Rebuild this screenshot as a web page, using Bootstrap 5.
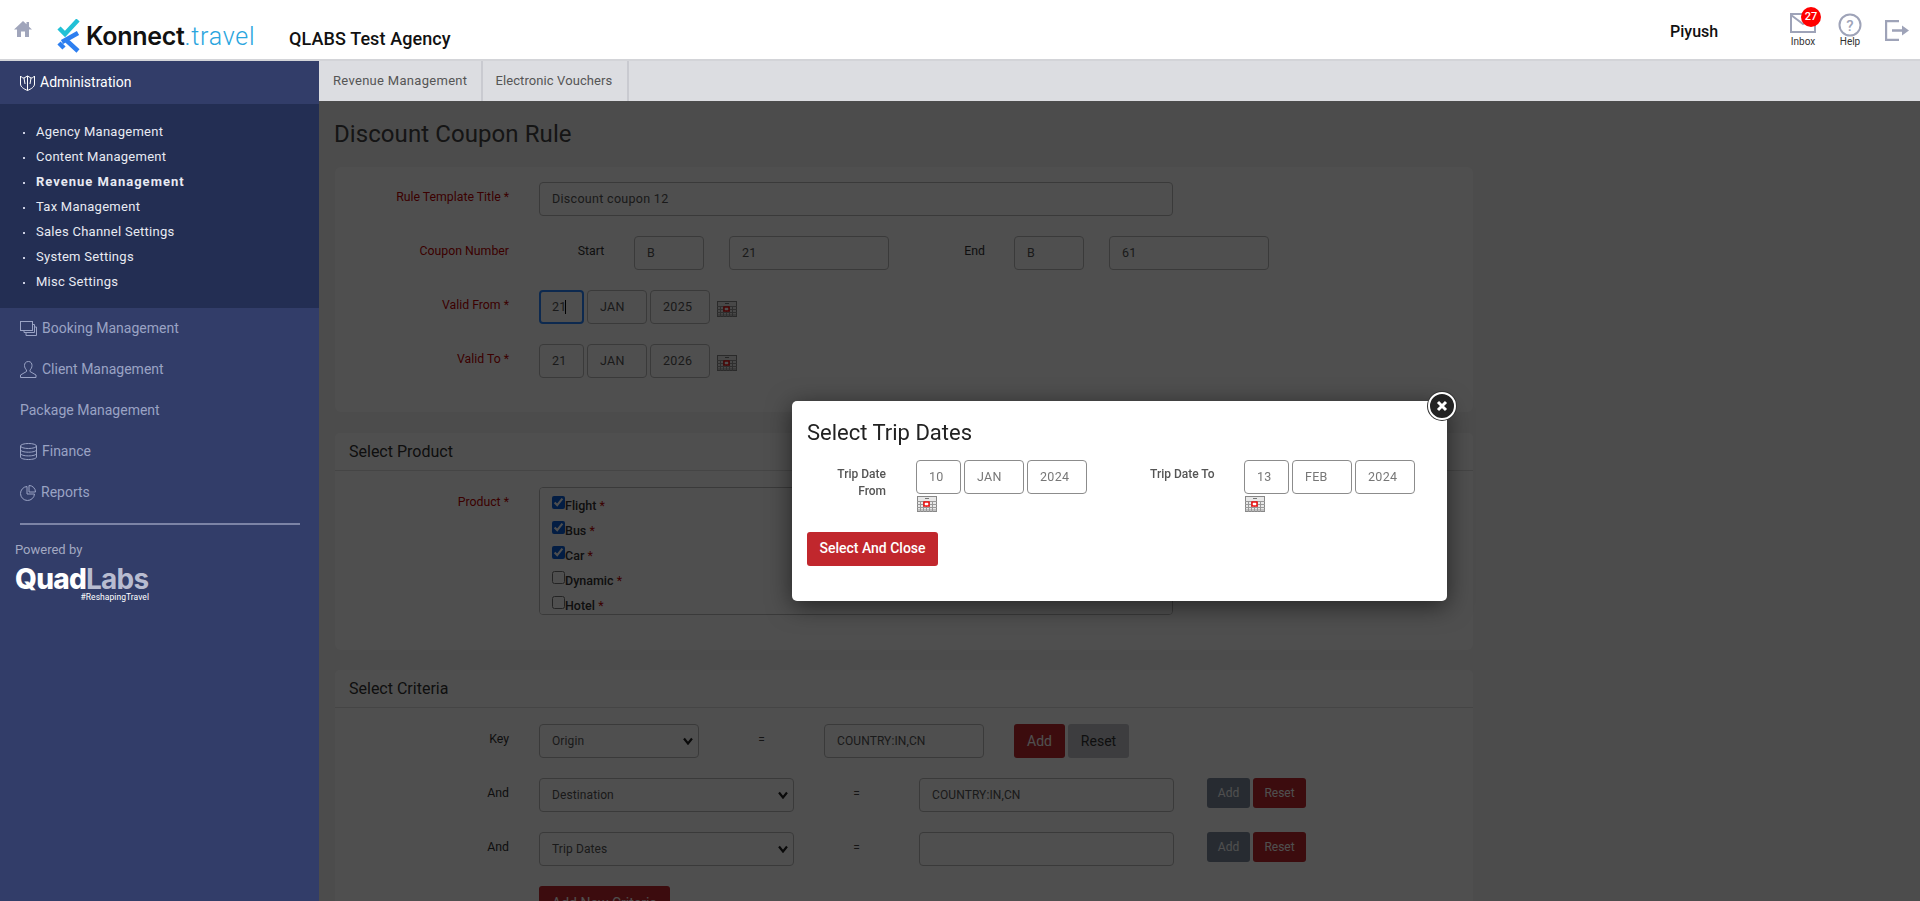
<!DOCTYPE html>
<html lang="en">
<head>
<meta charset="utf-8">
<title>Discount Coupon Rule</title>
<link href="https://cdn.jsdelivr.net/npm/bootstrap@5.3.0/dist/css/bootstrap.min.css" rel="stylesheet">
<style>
html,body{height:901px;overflow:hidden}
body{font-family:Roboto,"Liberation Sans",sans-serif;font-size:13px;color:#222;background:#f5f5f5}
.app-top{height:61px;background:#fff;border-bottom:2px solid #d3d4d8;padding-left:14px}
.home-ic{width:18px;height:18px;margin-top:-1px}
.brand-wrap{margin-left:25px;margin-top:13px;width:232px}
.brand-k{font-family:Inter,Roboto,sans-serif;font-weight:600;font-size:25px;color:#111;letter-spacing:-.3px;line-height:1;margin-left:5px}
.brand-t{font-weight:300;font-size:25px;color:#2aa5de;line-height:1;margin-top:1px;letter-spacing:.75px}
.agency{font-size:18px;font-weight:500;color:#111;margin-top:18px;letter-spacing:.1px}
.user-nm{font-size:16px;font-weight:500;color:#111;position:absolute;left:1670px;top:20px}
.top-tool{position:absolute;top:13px;text-align:center;font-size:10px;color:#333;line-height:1}
.top-tool svg{display:block;margin:0 auto 4px}
.inbox-badge{position:absolute;left:11px;top:-6px;width:20px;height:20px;border-radius:50%;background:#f00;color:#fff;font-size:11px;font-weight:500;line-height:20px;text-align:center}
.app-body{height:840px}
.side{width:319px;background:#323d69;flex:none}
.side-head{height:43px;color:#fff;font-size:14px;padding-left:20px}
.side-head svg{margin-right:5px}
.side-sub{height:204px;background:#232e53;padding:15px 0 0 36px;list-style:none;margin:0}
.side-sub li{height:25px;line-height:25px;color:#e8eaf2;font-size:13px;letter-spacing:.27px;position:relative}
.side-sub li::before{content:"";position:absolute;left:-13px;top:13px;width:2px;height:2px;background:#c9cde0}
.side-sub li.on{font-weight:700;letter-spacing:1px}
.side-item{height:41px;color:#9aa3c4;font-size:14px;padding-left:20px}
.side-item svg{margin-right:5px;flex:none}
.side-rule{height:2px;background:#7c84a6;margin:10px 19px 0 20px}
.pow{color:#a3a9c2;font-size:13px;padding:17px 0 0 15px;line-height:15px}
.ql{margin:10px 0 0 15px;width:134px;height:36px;position:relative}
.ql-a{font-family:Inter,Roboto,sans-serif;font-weight:800;font-size:28px;line-height:24px;color:#fff;letter-spacing:-.75px;white-space:nowrap}
.ql-b{color:#b8bcd0;font-weight:700}
.ql-c{position:absolute;right:0;top:26px;font-size:8.500px;line-height:9px;color:#fff;letter-spacing:.05px;white-space:nowrap}
.work{flex:1 1 auto;min-width:0;position:relative;overflow:hidden}
.tabbar{height:40px;background:#dcdde1;position:relative;z-index:3}
.tabbtn{padding:0 14px;border-right:2px solid #c9cad0;line-height:40px;color:#555;font-size:13px;letter-spacing:.3px;height:40px}
.tabbtn+.tabbtn{padding:0 15px 0 12px;letter-spacing:.1px}
.dim{position:absolute;left:0;right:0;top:40px;bottom:0;background:rgba(0,0,0,.69);z-index:2}
.pg{padding:0 0 0 16px;width:1154px}
.pg-h{font-size:24px;font-weight:400;color:#444;line-height:28px;margin:19px 0 19px -1px;letter-spacing:.08px}
.pcard{border:0;border-radius:6px;background:#fff;--bs-card-bg:#fff;margin-bottom:21px}
.pcard .card-header{background:#fff;height:38px;padding:0 14px;line-height:37px;font-size:16px;color:#333;border-bottom:1px solid #ddd}
.f-row{display:flex;align-items:flex-start;height:34px;margin-bottom:20px}
.f-lbl{width:174px;flex:none;text-align:right;font-size:12.300px;font-weight:400;color:#c00000;padding-top:7px;line-height:17px;margin-right:30px}
.f-lbl.blk{color:#333}
.f-lbl.start{width:95px;margin:0;padding-left:9px;text-align:center}
.f-lbl.end{width:125px;margin:0;padding-left:46px;text-align:center}
.fc{height:34px;border:1px solid #bbb;border-radius:4px;font-size:12.500px;color:#555;padding:0 12px 1px;letter-spacing:.3px;display:block;background-color:#fff;box-shadow:none;min-height:0}
.fc:focus{box-shadow:none}
.fc.sel{padding:0 12px;background-image:url("data:image/svg+xml,%3Csvg xmlns='http://www.w3.org/2000/svg' viewBox='0 0 10 8'%3E%3Cpath d='M1 1.500l4 5 4-5' fill='none' stroke='%23222' stroke-width='2.200'/%3E%3C/svg%3E");background-position:right 5px center;background-size:10px 8px}
.crit .fc{font-size:12px;letter-spacing:.1px}
.w45{width:45px}.w60{width:60px}.w70{width:70px}.w160{width:160px}.w255{width:255px}.w634{width:634px}
.gap25{margin-left:25px}
.dgap{gap:3px}
.cal{width:20px;height:16px;display:block;flex:none}
.cal-r{margin:11px 0 0 4px}
.cal-m{margin:2px 0 0 1px}
.body1{padding:15px 0 0 0;height:245px}
.body2{padding:16px 0 0 0;height:179px}
.prodbox{width:634px;height:128px;border:1px solid #bbb;border-radius:4px;overflow:hidden scroll;padding:8px 12px;background:#fff}
.pitem{height:25px;font-weight:500;font-size:12.500px;color:#333;display:flex;align-items:flex-start}
.pitem input{width:13px;height:13px;margin:0;flex:none;accent-color:#0b5fd7}
.pitem span{line-height:17px;padding-top:1px}
.pitem span span{padding:0}
.star{color:#c00000;font-weight:400}
.eq{text-align:center;color:#444;font-size:12px;padding-top:7px}
.bt{height:34px;border:0;border-radius:3px;font-size:14px;padding:0;color:#fff}
.bt-r{background:#c1272d}
.bt-g{background:#c4c6cb;color:#333}
.bs-s{height:30px;font-size:12px;border-radius:3px;border:0;color:#fff;padding:0;width:43px}
.bs-d{background:#7d8a9e}
.bs-r{background:#c1272d;width:53px;margin-left:3px}
.focus-in{border:2px solid #2a86ff;padding-left:11px}
.caret-wrap{position:relative}
.caret-mk{position:absolute;left:26px;top:10px;width:1px;height:14px;background:#000}
.mdl{position:absolute;left:473px;top:340px;width:655px;height:200px;background:#fff;border-radius:5px;box-shadow:0 5px 25px rgba(0,0,0,.55);padding:19px 15px 14px;z-index:5}
.mdl-t{font-size:22px;font-weight:400;color:#222;line-height:26px;margin-bottom:14px}
.mdl .fc{border-color:#8c8c8c;color:#777}
.m-lbl{font-size:12px;font-weight:500;color:#555;text-align:right;line-height:17px;padding-top:6px}
.mclose{position:absolute;right:-9px;top:-9px;width:28px;height:28px;border-radius:50%;background:#222;border:2px solid #fff;box-shadow:0 0 0 1px #333;padding:0;display:flex;align-items:center;justify-content:center}
.sel-btn{width:131px;height:34px;margin-top:20px;background:#c1272d;color:#fff;border:0;border-radius:3px;font-size:14px;font-weight:500;padding:0 0 1px}
</style>
</head>
<body>
<svg width="0" height="0" class="position-absolute">
<symbol id="calx" viewBox="0 0 20 16">
<rect x=".5" y=".5" width="19" height="15" fill="#e8e8e8" stroke="#888"/>
<path d="M0 5.500h20M0 8.500h20M0 11.500h20M0 14h20M3.500 5v11M6.500 5v11M9.500 5v11M12.500 5v11M15.500 5v11" stroke="#999" stroke-width="1"/>
<rect x="7" y="6" width="5" height="4" fill="#fff" stroke="#e00" stroke-width="1.400"/>
<path d="M8 2.500h4" stroke="#777"/>
</symbol>
</svg>

<header class="app-top d-flex align-items-center position-relative">
  <svg class="home-ic" viewBox="0 0 18 18"><path d="M9 1 0 9.500h3V17h4v-5.500h4V17h4V9.500h3L15 6.700V2h-2.500v2.300z" fill="#a0a5bb"/></svg>
  <div class="brand-wrap d-flex align-items-center">
    <svg width="24" height="34" viewBox="0 0 24 34"><path d="M2 9l6 6L21 1" fill="none" stroke="#22c1d6" stroke-width="4.500"/><path d="M21 14 5 23M9 21l12 11M2 24l5 5" fill="none" stroke="#2d7ff0" stroke-width="4.500"/></svg>
    <span class="brand-k">Konnect</span><span class="brand-t">.travel</span>
  </div>
  <div class="agency">QLABS Test Agency</div>
  <div class="user-nm">Piyush</div>
  <div class="top-tool" style="left:1790px;width:26px">
    <svg width="26" height="20" viewBox="0 0 26 20"><rect x="1" y="1" width="24" height="18" fill="none" stroke="#9ea3b8" stroke-width="2"/><path d="M1 2l12 9 12-9" fill="none" stroke="#9ea3b8" stroke-width="2"/></svg>
    Inbox<span class="inbox-badge">27</span>
  </div>
  <div class="top-tool" style="left:1838px;width:24px">
    <svg width="24" height="24" viewBox="0 0 24 24" style="margin-bottom:0"><circle cx="12" cy="12" r="10.500" fill="none" stroke="#9ea3b8" stroke-width="2"/><text x="12" y="17.500" text-anchor="middle" font-size="15" font-weight="500" fill="#9ea3b8" font-family="Roboto">?</text></svg>
    Help
  </div>
  <svg class="position-absolute" style="left:1885px;top:20px" width="24" height="21" viewBox="0 0 24 21"><path d="M14 1H1v19h13M7 10.500h11" fill="none" stroke="#9ea3b8" stroke-width="2.400"/><path d="M17 5.500l7 5-7 5z" fill="#9ea3b8"/></svg>
</header>

<div class="app-body d-flex">
  <aside class="side">
    <div class="side-head d-flex align-items-center">
      <svg width="15" height="16" viewBox="0 0 15 16"><path d="M.5 1c1 1.500 2.500 2 3.500 2L7.500 1 11 3c1 0 2.500-.5 3.500-2v8c0 3-3.500 5-7 6.500C4 14 .5 12 .5 9zM7.500 1v14.500M4 3l1 6M11 3l-1 6" fill="none" stroke="#fff"/></svg>
      <span>Administration</span>
    </div>
    <ul class="side-sub">
      <li>Agency Management</li><li>Content Management</li><li class="on">Revenue Management</li><li>Tax Management</li><li>Sales Channel Settings</li><li>System Settings</li><li>Misc Settings</li>
    </ul>
    <div class="side-item d-flex align-items-center">
      <svg width="17" height="15" viewBox="0 0 17 15" fill="none" stroke="#9aa3c4"><rect x=".5" y=".5" width="12" height="9"/><path d="M12.500 3.500h2v8H4v-2M14.500 6h2v8.500H6v-3"/></svg>Booking Management
    </div>
    <div class="side-item d-flex align-items-center">
      <svg width="17" height="17" viewBox="0 0 17 17" fill="none" stroke="#9aa3c4"><path d="M8.500.500c2.500 0 3.500 2 3.500 4 0 2-1 3.500-2 4.500v1.500l6 3.500v2.500H.5V14l6-3.500V9c-1-1-2-2.500-2-4.500s1-4 4-4z"/></svg>Client Management
    </div>
    <div class="side-item d-flex align-items-center">Package Management</div>
    <div class="side-item d-flex align-items-center">
      <svg width="17" height="17" viewBox="0 0 17 17" fill="none" stroke="#9aa3c4"><ellipse cx="8.500" cy="3" rx="8" ry="2.500"/><path d="M.5 3v11c0 1.500 3.500 2.500 8 2.500s8-1 8-2.500V3M.5 6.700c0 1.500 3.500 2.500 8 2.500s8-1 8-2.500M.5 10.400c0 1.500 3.500 2.500 8 2.500s8-1 8-2.500"/></svg>Finance
    </div>
    <div class="side-item d-flex align-items-center">
      <svg width="16" height="16" viewBox="0 0 16 16" fill="none" stroke="#9aa3c4"><path d="M7 1.500a7 7 0 1 0 7.500 7.500H7z"/><path d="M9 .5a6.500 6.500 0 0 1 6.500 6.500H9z"/></svg>Reports
    </div>
    <div class="side-rule"></div>
    <div class="pow">Powered by</div>
    <div class="ql"><div class="ql-a">Quad<span class="ql-b">Labs</span></div><div class="ql-c">#ReshapingTravel</div></div>
  </aside>

  <main class="work">
    <nav class="tabbar d-flex">
      <div class="tabbtn">Revenue Management</div>
      <div class="tabbtn">Electronic Vouchers</div>
    </nav>
    <div class="pg">
      <h1 class="pg-h">Discount Coupon Rule</h1>

      <section class="card pcard">
        <div class="body1">
          <div class="f-row">
            <label class="f-lbl">Rule Template Title *</label>
            <input class="form-control fc w634" value="Discount coupon 12">
          </div>
          <div class="f-row">
            <label class="f-lbl">Coupon Number</label>
            <span class="f-lbl blk start">Start</span>
            <input class="form-control fc w70" value="B">
            <input class="form-control fc w160 gap25" value="21">
            <span class="f-lbl blk end">End</span>
            <input class="form-control fc w70" value="B">
            <input class="form-control fc w160 gap25" value="61">
          </div>
          <div class="f-row">
            <label class="f-lbl">Valid From *</label>
            <div class="d-flex dgap align-items-start">
              <div class="caret-wrap"><input class="form-control fc w45 focus-in" value="21"><span class="caret-mk"></span></div>
              <input class="form-control fc w60" value="JAN">
              <input class="form-control fc w60" value="2025">
              <svg class="cal cal-r"><use href="#calx"/></svg>
            </div>
          </div>
          <div class="f-row">
            <label class="f-lbl">Valid To *</label>
            <div class="d-flex dgap align-items-start">
              <input class="form-control fc w45" value="21">
              <input class="form-control fc w60" value="JAN">
              <input class="form-control fc w60" value="2026">
              <svg class="cal cal-r"><use href="#calx"/></svg>
            </div>
          </div>
        </div>
      </section>

      <section class="card pcard" style="margin-bottom:20px">
        <div class="card-header">Select Product</div>
        <div class="body2 d-flex align-items-start">
          <label class="f-lbl">Product *</label>
          <div class="prodbox">
            <div class="pitem"><input type="checkbox" checked><span>Flight <span class="star">*</span></span></div>
            <div class="pitem"><input type="checkbox" checked><span>Bus <span class="star">*</span></span></div>
            <div class="pitem"><input type="checkbox" checked><span>Car <span class="star">*</span></span></div>
            <div class="pitem"><input type="checkbox"><span>Dynamic <span class="star">*</span></span></div>
            <div class="pitem"><input type="checkbox"><span>Hotel <span class="star">*</span></span></div>
          </div>
        </div>
      </section>

      <section class="card pcard crit">
        <div class="card-header">Select Criteria</div>
        <div style="padding-top:16px">
          <div class="f-row">
            <label class="f-lbl blk">Key</label>
            <select class="form-select fc sel w160"><option>Origin</option></select>
            <div class="eq" style="width:125px">=</div>
            <input class="form-control fc w160" value="COUNTRY:IN,CN">
            <button class="bt bt-r" style="width:51px;margin-left:30px">Add</button>
            <button class="bt bt-g" style="width:61px;margin-left:3px">Reset</button>
          </div>
          <div class="f-row">
            <label class="f-lbl blk">And</label>
            <select class="form-select fc sel w255"><option>Destination</option></select>
            <div class="eq" style="width:125px">=</div>
            <input class="form-control fc w255" value="COUNTRY:IN,CN">
            <button class="bs-s bs-d" style="margin-left:33px">Add</button>
            <button class="bs-s bs-r">Reset</button>
          </div>
          <div class="f-row">
            <label class="f-lbl blk">And</label>
            <select class="form-select fc sel w255"><option>Trip Dates</option></select>
            <div class="eq" style="width:125px">=</div>
            <input class="form-control fc w255" value="">
            <button class="bs-s bs-d" style="margin-left:33px">Add</button>
            <button class="bs-s bs-r">Reset</button>
          </div>
          <div class="f-row">
            <span class="f-lbl"></span>
            <button class="bt bt-r" style="width:131px">Add New Criteria</button>
          </div>
        </div>
      </section>
    </div>

    <div class="dim"></div>

    <div class="mdl" role="dialog">
      <button class="mclose" aria-label="Close"><svg width="12" height="12" viewBox="0 0 12 12"><path d="M2 2l8 8M10 2l-8 8" stroke="#fff" stroke-width="3"/></svg></button>
      <div class="mdl-t">Select Trip Dates</div>
      <div class="d-flex align-items-start">
        <div class="m-lbl" style="width:79px">Trip Date From</div>
        <div style="margin-left:30px;width:171px">
          <div class="d-flex dgap">
            <input class="form-control fc w45" value="10">
            <input class="form-control fc w60" value="JAN">
            <input class="form-control fc w60" value="2024">
          </div>
          <svg class="cal cal-m"><use href="#calx"/></svg>
        </div>
        <div class="m-lbl text-nowrap" style="margin-left:63px;width:63px">Trip Date To</div>
        <div style="margin-left:31px;width:171px">
          <div class="d-flex dgap">
            <input class="form-control fc w45" value="13">
            <input class="form-control fc w60" value="FEB">
            <input class="form-control fc w60" value="2024">
          </div>
          <svg class="cal cal-m"><use href="#calx"/></svg>
        </div>
      </div>
      <button class="sel-btn">Select And Close</button>
    </div>
  </main>
</div>
<script src="https://cdn.jsdelivr.net/npm/bootstrap@5.3.0/dist/js/bootstrap.bundle.min.js"></script>
</body>
</html>
